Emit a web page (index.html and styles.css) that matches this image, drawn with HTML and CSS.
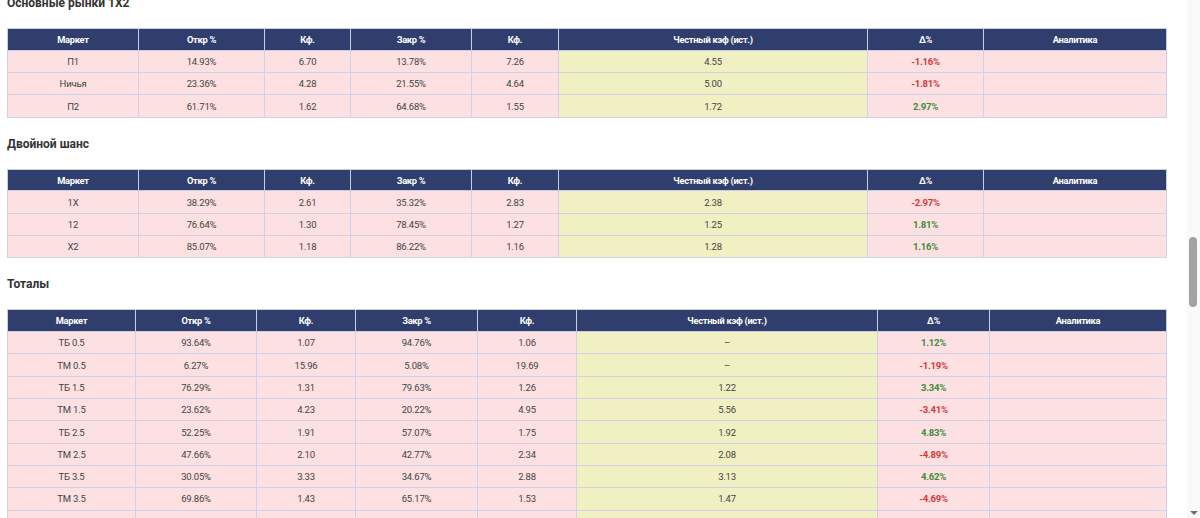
FILE: index.html
```html
<!DOCTYPE html>
<html lang="ru">
<head>
<meta charset="utf-8">
<title>Рынки</title>
<link rel="stylesheet" href="styles.css">
</head>
<body>
<div class="page">
  <section class="block">
    <h2 class="title">Основные рынки 1X2</h2>
    <table class="mt t-main">
      <colgroup><col class="c1"><col class="c2"><col class="c3"><col class="c4"><col class="c5"><col class="c6"><col class="c7"><col class="c8"></colgroup>
      <thead><tr><th>Маркет</th><th>Откр %</th><th>Кф.</th><th>Закр %</th><th>Кф.</th><th>Честный кэф (ист.)</th><th>Δ%</th><th>Аналитика</th></tr></thead>
      <tbody>
        <tr><td>П1</td><td>14.93%</td><td>6.70</td><td>13.78%</td><td>7.26</td><td class="fair">4.55</td><td class="d neg">-1.16%</td><td></td></tr>
        <tr><td>Ничья</td><td>23.36%</td><td>4.28</td><td>21.55%</td><td>4.64</td><td class="fair">5.00</td><td class="d neg">-1.81%</td><td></td></tr>
        <tr><td>П2</td><td>61.71%</td><td>1.62</td><td>64.68%</td><td>1.55</td><td class="fair">1.72</td><td class="d pos">2.97%</td><td></td></tr>
      </tbody>
    </table>
  </section>
  <section class="block">
    <h2 class="title">Двойной шанс</h2>
    <table class="mt t-main">
      <colgroup><col class="c1"><col class="c2"><col class="c3"><col class="c4"><col class="c5"><col class="c6"><col class="c7"><col class="c8"></colgroup>
      <thead><tr><th>Маркет</th><th>Откр %</th><th>Кф.</th><th>Закр %</th><th>Кф.</th><th>Честный кэф (ист.)</th><th>Δ%</th><th>Аналитика</th></tr></thead>
      <tbody>
        <tr><td>1X</td><td>38.29%</td><td>2.61</td><td>35.32%</td><td>2.83</td><td class="fair">2.38</td><td class="d neg">-2.97%</td><td></td></tr>
        <tr><td>12</td><td>76.64%</td><td>1.30</td><td>78.45%</td><td>1.27</td><td class="fair">1.25</td><td class="d pos">1.81%</td><td></td></tr>
        <tr><td>X2</td><td>85.07%</td><td>1.18</td><td>86.22%</td><td>1.16</td><td class="fair">1.28</td><td class="d pos">1.16%</td><td></td></tr>
      </tbody>
    </table>
  </section>
  <section class="block">
    <h2 class="title">Тоталы</h2>
    <table class="mt t-tot">
      <colgroup><col class="c1"><col class="c2"><col class="c3"><col class="c4"><col class="c5"><col class="c6"><col class="c7"><col class="c8"></colgroup>
      <thead><tr><th>Маркет</th><th>Откр %</th><th>Кф.</th><th>Закр %</th><th>Кф.</th><th>Честный кэф (ист.)</th><th>Δ%</th><th>Аналитика</th></tr></thead>
      <tbody>
        <tr><td>ТБ 0.5</td><td>93.64%</td><td>1.07</td><td>94.76%</td><td>1.06</td><td class="fair">–</td><td class="d pos">1.12%</td><td></td></tr>
        <tr><td>ТМ 0.5</td><td>6.27%</td><td>15.96</td><td>5.08%</td><td>19.69</td><td class="fair">–</td><td class="d neg">-1.19%</td><td></td></tr>
        <tr><td>ТБ 1.5</td><td>76.29%</td><td>1.31</td><td>79.63%</td><td>1.26</td><td class="fair">1.22</td><td class="d pos">3.34%</td><td></td></tr>
        <tr><td>ТМ 1.5</td><td>23.62%</td><td>4.23</td><td>20.22%</td><td>4.95</td><td class="fair">5.56</td><td class="d neg">-3.41%</td><td></td></tr>
        <tr><td>ТБ 2.5</td><td>52.25%</td><td>1.91</td><td>57.07%</td><td>1.75</td><td class="fair">1.92</td><td class="d pos">4.83%</td><td></td></tr>
        <tr><td>ТМ 2.5</td><td>47.66%</td><td>2.10</td><td>42.77%</td><td>2.34</td><td class="fair">2.08</td><td class="d neg">-4.89%</td><td></td></tr>
        <tr><td>ТБ 3.5</td><td>30.05%</td><td>3.33</td><td>34.67%</td><td>2.88</td><td class="fair">3.13</td><td class="d pos">4.62%</td><td></td></tr>
        <tr><td>ТМ 3.5</td><td>69.86%</td><td>1.43</td><td>65.17%</td><td>1.53</td><td class="fair">1.47</td><td class="d neg">-4.69%</td><td></td></tr>
        <tr><td>ТБ 4.5</td><td>11.40%</td><td>8.77</td><td>13.02%</td><td>7.68</td><td class="fair">7.95</td><td class="d pos">1.62%</td><td></td></tr>
      </tbody>
    </table>
  </section>
</div>
<div class="scrollbar"><div class="thumb"></div><div class="arrow-down"></div></div>
</body>
</html>
```
FILE: styles.css
```css
html, body {
  margin: 0;
  padding: 0;
  background: #ffffff;
  height: 518px;
  overflow: hidden;
}
body {
  font-family: Roboto, "Liberation Sans", sans-serif;
  color: #444444;
}
.page {
  width: 1159px;
  padding-left: 7px;
  margin-top: -5px;
  display: flex;
  flex-direction: column;
  gap: 18px;
}
.block {
  display: flex;
  flex-direction: column;
  gap: 17px;
}
.title {
  margin: 0;
  font-size: 12px;
  line-height: 16px;
  font-weight: 700;
  color: #333333;
}
.mt {
  width: 1159px;
  table-layout: fixed;
  border-collapse: collapse;
  font-size: 9.5px;
}
.mt th {
  background: #2f3e6d;
  color: #ffffff;
  font-weight: 700;
  font-size: 9.3px;
  height: 20.8px;
  padding: 0;
  border: 1px solid #c9cde2;
  text-align: center;
  letter-spacing: -0.3px;
}
.mt td {
  background: #fde0e1;
  height: 21.3px;
  padding: 0;
  border: 1px solid #cfd2e6;
  text-align: center;
  color: #444444;
  letter-spacing: -0.2px;
}
.mt td.fair { background: #f0f0c2; }
.mt td.d { font-weight: 700; }
.mt td.neg { color: #d2383a; }
.mt td.pos { color: #3d8b3d; }

.t-main .c1 { width: 131px; }
.t-main .c2 { width: 126px; }
.t-main .c3 { width: 86px; }
.t-main .c4 { width: 121px; }
.t-main .c5 { width: 87px; }
.t-main .c6 { width: 309px; }
.t-main .c7 { width: 116px; }
.t-main .c8 { width: 183px; }

.t-tot .c1 { width: 128px; }
.t-tot .c2 { width: 121px; }
.t-tot .c3 { width: 99px; }
.t-tot .c4 { width: 122px; }
.t-tot .c5 { width: 99px; }
.t-tot .c6 { width: 301px; }
.t-tot .c7 { width: 112px; }
.t-tot .c8 { width: 177px; }

.scrollbar {
  position: fixed;
  top: 0;
  right: 0;
  width: 13px;
  height: 518px;
  background: #f9f9f9;
}
.thumb {
  position: absolute;
  left: 2px;
  top: 237px;
  width: 8px;
  height: 70px;
  border-radius: 4px;
  background: #a3a3a3;
}
.arrow-down {
  position: absolute;
  left: 3px;
  bottom: 3px;
  width: 0;
  height: 0;
  border-left: 4px solid transparent;
  border-right: 4px solid transparent;
  border-top: 4px solid #6f6f6f;
}
```
